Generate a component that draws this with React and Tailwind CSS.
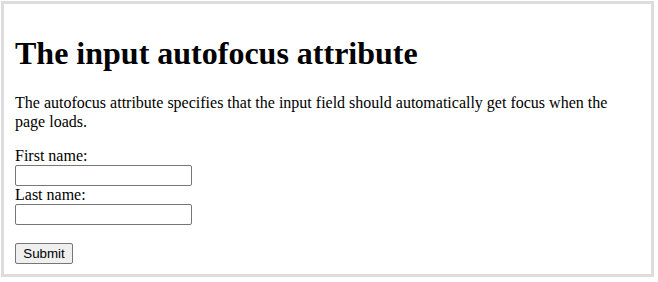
import React from "react";

export default function App() {
  return (
    <div className="bg-white w-[658px] h-[282px] pt-px pl-px font-['Liberation_Serif',serif] text-black">
      {/* result frame */}
      <div className="w-[653px] h-[276px] border-[3px] border-[#dddddd] pl-[11px] pr-[11px] pt-[31px]">
        <h1 className="text-[32px] font-bold leading-[36.8px] mb-[22.5px]">
          The input autofocus attribute
        </h1>
        <p className="text-[16px] leading-[18.4px] mb-[16px]">
          The autofocus attribute specifies that the input field should automatically get focus when the page loads.
        </p>

        <form className="text-[16px]">
          <label className="block h-[18px] leading-[18.4px]">First name:</label>
          <input
            type="text"
            className="block w-[177px] h-[21px] border border-[#767676] rounded-[2px] px-[2px] bg-white"
          />
          <label className="block h-[18.3px] leading-[18.4px]">Last name:</label>
          <input
            type="text"
            className="block w-[177px] h-[21px] border border-[#767676] rounded-[2px] px-[2px] bg-white"
          />
          <button
            type="button"
            className="mt-[17.7px] block w-[58px] h-[21px] border border-[#767676] rounded-[2px] bg-[#efefef] text-[13.33px] leading-[15px] font-['Liberation_Sans',Arial,sans-serif] text-black"
          >
            Submit
          </button>
        </form>
      </div>
    </div>
  );
}
